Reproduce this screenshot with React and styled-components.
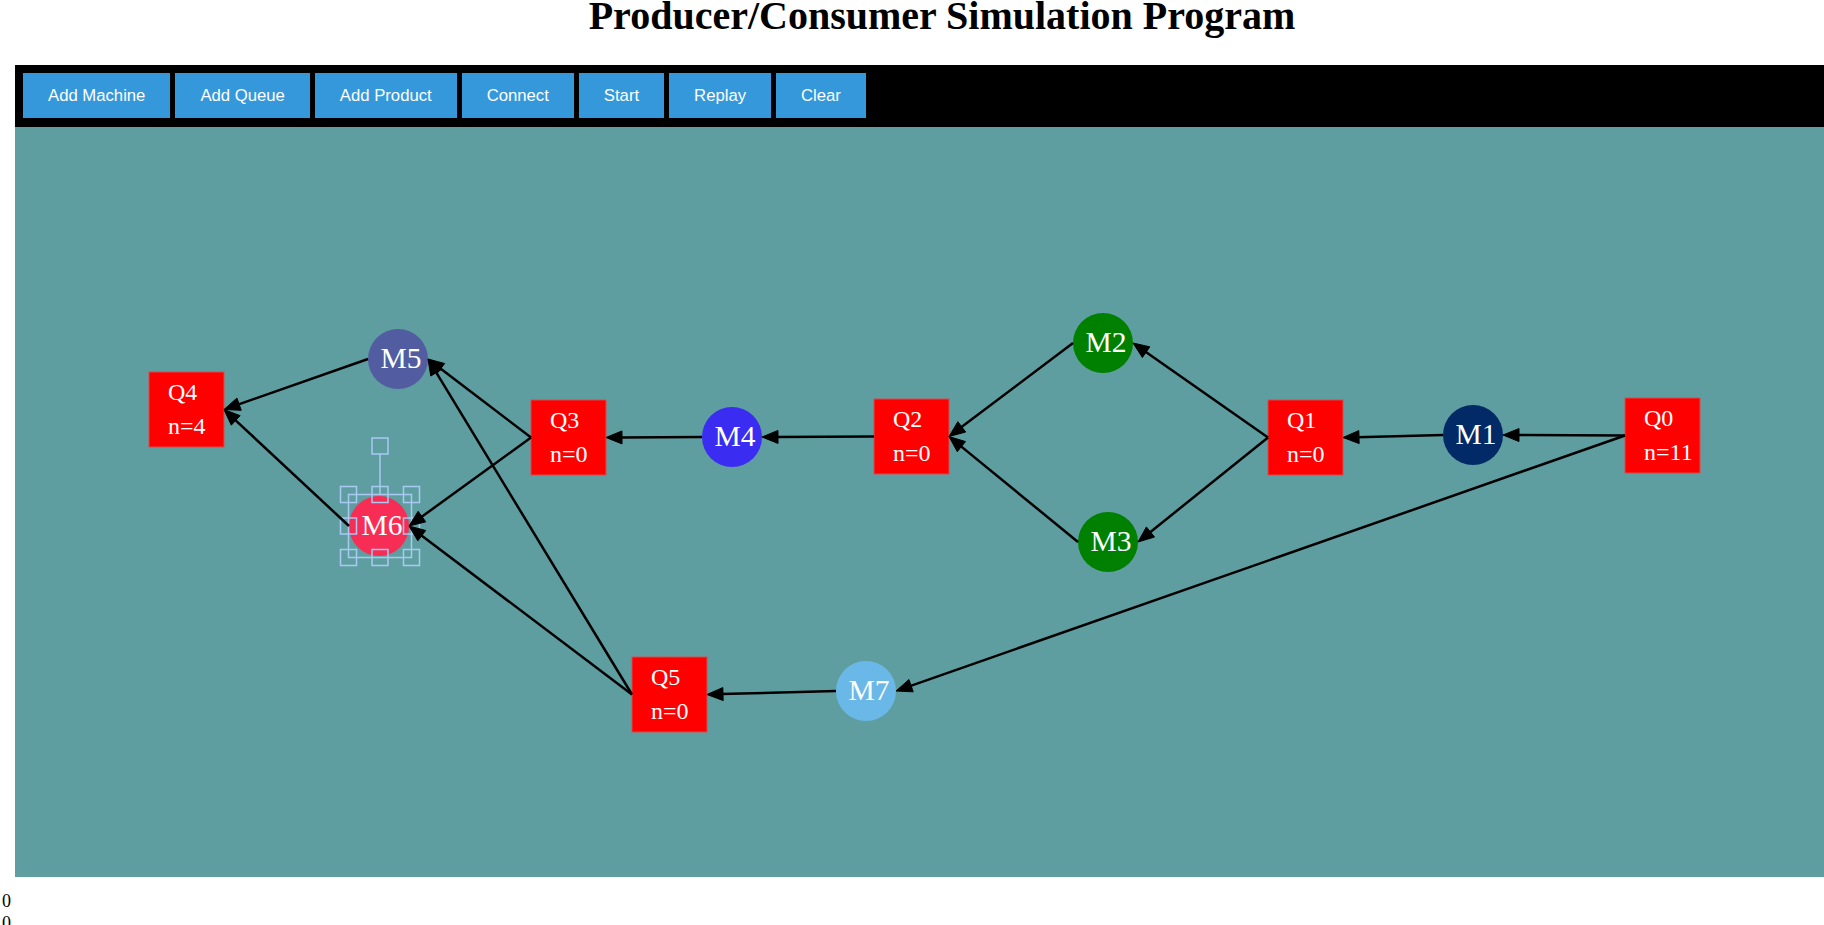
import React from 'react';
import styled, { createGlobalStyle } from 'styled-components';

const GlobalStyle = createGlobalStyle`
  html, body { margin: 0; padding: 0; overflow: hidden; background: #ffffff; }
  body { font-family: "Liberation Serif", "Times New Roman", serif; color: #000; }
`;

const Page = styled.div`
  width: 1884px;
  box-sizing: border-box;
  padding: 0 15px;
`;

const Title = styled.h1`
  margin: 0 0 34px;
  font: bold 40px/31px "Liberation Serif", "Times New Roman", serif;
  text-align: center;
`;

const Toolbar = styled.div`
  display: flex;
  gap: 5px;
  padding: 8px 8px 9px;
  background: #000000;
`;

const ToolButton = styled.button`
  height: 45px;
  padding: 0 25px;
  border: none;
  background: #3498db;
  color: #ffffff;
  font: 16.7px "Liberation Sans", Arial, sans-serif;
  cursor: pointer;
`;

const Canvas = styled.div`
  width: 1854px;
  height: 750px;
  background: #5f9ea0;
`;

const Board = styled.svg`
  display: block;
`;

const QueueBox = styled.rect`
  fill: #ff0000;
  stroke: #d84a4a;
  stroke-width: 1;
`;

const QueueLabel = styled.text`
  fill: #ffffff;
  font: 24px "Liberation Serif", "Times New Roman", serif;
`;

const MachineDot = styled.circle`
  fill: ${(p) => p.$color};
`;

const MachineLabel = styled.text`
  fill: #ffffff;
  font: 29.5px "Liberation Serif", "Times New Roman", serif;
  text-anchor: middle;
`;

const EdgeLine = styled.line`
  stroke: #000000;
  stroke-width: 2.5;
`;

const EdgeHead = styled.polygon`
  fill: #000000;
  stroke: #000000;
  stroke-width: 1;
  stroke-linejoin: miter;
`;

const HandleLine = styled.line`
  stroke: #a9c9f2;
  stroke-width: 1.5;
`;

const HandleFrame = styled.rect`
  fill: none;
  stroke: #a9c9f2;
  stroke-width: 1.5;
`;

const Footer = styled.div`
  padding: 13px 0 0 2px;
`;

const Counter = styled.div`
  font: 18px/22px "Liberation Serif", "Times New Roman", serif;
`;

const Q = 75;
const R = 30;

const queues = [
  { id: 'Q0', x: 1610, y: 271, n: 11 },
  { id: 'Q1', x: 1253, y: 273, n: 0 },
  { id: 'Q2', x: 859, y: 272, n: 0 },
  { id: 'Q3', x: 516, y: 273, n: 0 },
  { id: 'Q4', x: 134, y: 245, n: 4 },
  { id: 'Q5', x: 617, y: 530, n: 0 },
];

const machines = [
  { id: 'M1', x: 1458, y: 308, color: '#012a66' },
  { id: 'M2', x: 1088, y: 216, color: '#008000' },
  { id: 'M3', x: 1093, y: 415, color: '#008000' },
  { id: 'M4', x: 717, y: 310, color: '#3a2cf0' },
  { id: 'M5', x: 383, y: 232, color: '#515da0' },
  { id: 'M6', x: 364, y: 399, color: '#f72d55' },
  { id: 'M7', x: 851, y: 564, color: '#6ab8e8' },
];

const edges = [
  ['Q0', 'M1'], ['Q0', 'M7'], ['M1', 'Q1'], ['Q1', 'M2'], ['Q1', 'M3'],
  ['M2', 'Q2'], ['M3', 'Q2'], ['Q2', 'M4'], ['M4', 'Q3'], ['Q3', 'M5'],
  ['Q3', 'M6'], ['M5', 'Q4'], ['M6', 'Q4'], ['M7', 'Q5'], ['Q5', 'M5'],
  ['Q5', 'M6'],
];

const ports = {};
queues.forEach((q) => {
  ports[q.id] = { in: [q.x + Q, q.y + Q / 2], out: [q.x, q.y + Q / 2] };
});
machines.forEach((m) => {
  ports[m.id] = { in: [m.x + R, m.y], out: [m.x - R, m.y] };
});

function Edge({ from, to }) {
  const [sx, sy] = ports[from].out;
  const [ex, ey] = ports[to].in;
  const dx = ex - sx;
  const dy = ey - sy;
  const len = Math.hypot(dx, dy);
  const ux = dx / len;
  const uy = dy / len;
  const L = 16;
  const W = 6.5;
  const bx = ex - ux * L;
  const by = ey - uy * L;
  const pts = [
    [ex, ey],
    [bx - uy * W, by + ux * W],
    [bx + uy * W, by - ux * W],
  ].map((p) => p.join(',')).join(' ');
  return (
    <g>
      <EdgeLine x1={sx} y1={sy} x2={bx + ux * 2} y2={by + uy * 2} />
      <EdgeHead points={pts} />
    </g>
  );
}

function Selection({ cx, cy }) {
  const h = 31.5;
  const left = cx - h;
  const top = cy - h;
  const s = 16;
  const xs = [cx - h, cx, cx + h];
  const ys = [cy - h, cy, cy + h];
  const anchors = [];
  ys.forEach((y, j) =>
    xs.forEach((x, i) => {
      if (!(i === 1 && j === 1)) anchors.push([x, y]);
    })
  );
  const rotY = cy - h - 48.5;
  return (
    <g>
      <HandleLine x1={cx} y1={rotY + s / 2} x2={cx} y2={top} />
      <HandleFrame x={left} y={top} width={h * 2} height={h * 2} />
      {anchors.map(([x, y]) => (
        <HandleFrame key={`${x}-${y}`} x={x - s / 2} y={y - s / 2} width={s} height={s} />
      ))}
      <HandleFrame x={cx - s / 2} y={rotY - s / 2} width={s} height={s} />
    </g>
  );
}

export default function App() {
  const buttons = ['Add Machine', 'Add Queue', 'Add Product', 'Connect', 'Start', 'Replay', 'Clear'];
  return (
    <>
      <GlobalStyle />
      <Page>
        <Title>Producer/Consumer Simulation Program</Title>
        <Toolbar>
          {buttons.map((b) => (
            <ToolButton key={b}>{b}</ToolButton>
          ))}
        </Toolbar>
        <Canvas>
          <Board width="1854" height="750" viewBox="0 0 1854 750">
            {queues.map((q) => (
              <g key={q.id}>
                <QueueBox x={q.x} y={q.y} width={Q} height={Q} />
                <QueueLabel x={q.x + 19} y={q.y + 28}>{q.id}</QueueLabel>
                <QueueLabel x={q.x + 19} y={q.y + 62}>{`n=${q.n}`}</QueueLabel>
              </g>
            ))}
            {machines.map((m) => (
              <g key={m.id}>
                <MachineDot cx={m.x} cy={m.y} r={R} $color={m.color} />
                <MachineLabel x={m.x + 3} y={m.y + 9}>{m.id}</MachineLabel>
              </g>
            ))}
            <Selection cx={365} cy={399} />
            {edges.map(([a, b]) => (
              <Edge key={`${a}-${b}`} from={a} to={b} />
            ))}
          </Board>
        </Canvas>
      </Page>
      <Footer>
        <Counter>0</Counter>
        <Counter>0</Counter>
      </Footer>
    </>
  );
}
